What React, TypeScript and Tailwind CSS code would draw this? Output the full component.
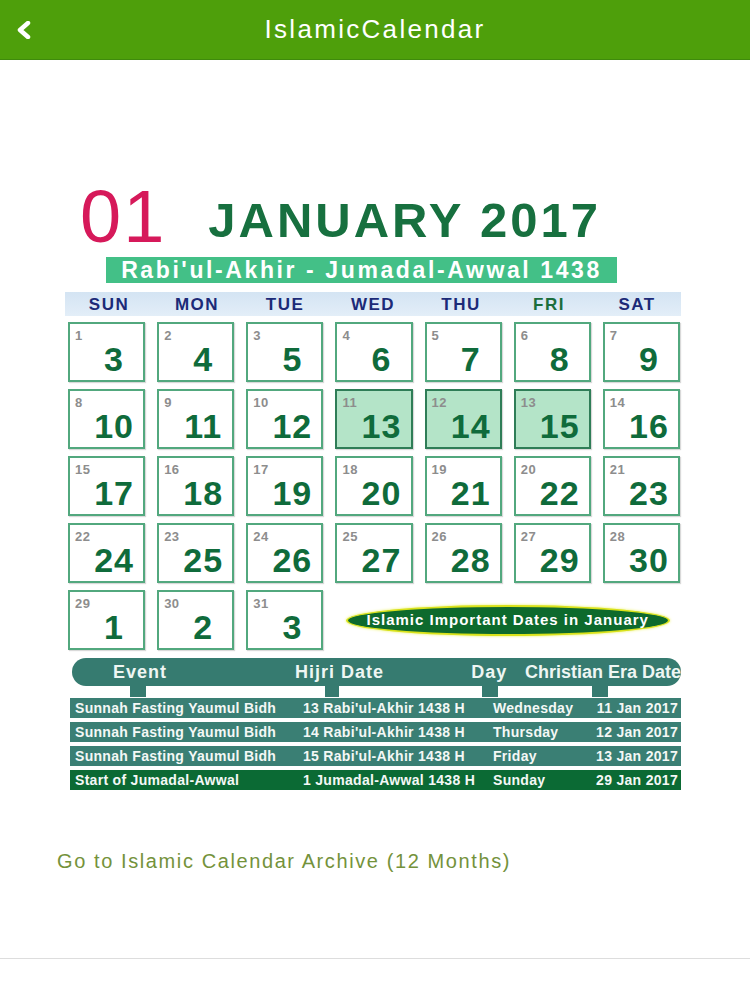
import React from "react";

type Cell = { h: number; g: number; hi?: boolean };

const cells: Cell[] = [
  { h: 1, g: 3 }, { h: 2, g: 4 }, { h: 3, g: 5 }, { h: 4, g: 6 }, { h: 5, g: 7 }, { h: 6, g: 8 }, { h: 7, g: 9 },
  { h: 8, g: 10 }, { h: 9, g: 11 }, { h: 10, g: 12 }, { h: 11, g: 13, hi: true }, { h: 12, g: 14, hi: true }, { h: 13, g: 15, hi: true }, { h: 14, g: 16 },
  { h: 15, g: 17 }, { h: 16, g: 18 }, { h: 17, g: 19 }, { h: 18, g: 20 }, { h: 19, g: 21 }, { h: 20, g: 22 }, { h: 21, g: 23 },
  { h: 22, g: 24 }, { h: 23, g: 25 }, { h: 24, g: 26 }, { h: 25, g: 27 }, { h: 26, g: 28 }, { h: 27, g: 29 }, { h: 28, g: 30 },
  { h: 29, g: 1 }, { h: 30, g: 2 }, { h: 31, g: 3 },
];

const days = ["SUN", "MON", "TUE", "WED", "THU", "FRI", "SAT"];

const events = [
  { ev: "Sunnah Fasting Yaumul Bidh", hijri: "13 Rabi'ul-Akhir 1438 H", day: "Wednesday", date: "11 Jan 2017", last: false },
  { ev: "Sunnah Fasting Yaumul Bidh", hijri: "14 Rabi'ul-Akhir 1438 H", day: "Thursday", date: "12 Jan 2017", last: false },
  { ev: "Sunnah Fasting Yaumul Bidh", hijri: "15 Rabi'ul-Akhir 1438 H", day: "Friday", date: "13 Jan 2017", last: false },
  { ev: "Start of Jumadal-Awwal", hijri: "1 Jumadal-Awwal 1438 H", day: "Sunday", date: "29 Jan 2017", last: true },
];

function DayCell({ c }: { c: Cell }) {
  return (
    <div
      className={`flex h-[60px] flex-col border-2 pl-[5px] pt-[5px] shadow-[1px_1px_1px_rgba(0,0,0,0.15)] ${
        c.hi ? "border-[#2f7d57] bg-[#b4e4c8]" : "border-[#52a87e] bg-white"
      }`}
    >
      <div className="text-[13px] font-bold leading-none tracking-[0.5px] text-[#8d8d8d]">{c.h}</div>
      <div className="pl-[10px] text-center text-[34px] font-bold leading-none tracking-[1px] text-[#0f6b3b]">
        {c.g}
      </div>
    </div>
  );
}

export default function App() {
  return (
    <div className="relative h-[1000px] w-[750px] overflow-hidden bg-white font-['Liberation_Sans',Arial,sans-serif]">
      {/* top bar */}
      <div className="flex h-[60px] items-center justify-center border-b border-[#3f8a0c] bg-[#4e9f0b]">
        <svg className="absolute left-[15px] top-[21px]" width="18" height="18" viewBox="0 0 18 18">
          <polyline points="13,2 5,9 13,16" fill="none" stroke="white" strokeWidth="4.5" strokeLinecap="round" strokeLinejoin="round" />
        </svg>
        <span className="text-[26px] tracking-[2.3px] text-white">IslamicCalendar</span>
      </div>

      {/* month heading */}
      <div className="mt-[120px] flex items-end pl-[80px]">
        <span className="text-[74px] leading-none tracking-[2px] text-[#d6195a]">01</span>
        <span className="mb-[9px] ml-[42px] text-[49px] font-bold leading-none tracking-[3px] text-[#17703f]">
          JANUARY 2017
        </span>
      </div>

      <div className="ml-[106px] mt-[3px] flex h-[26px] w-[511px] items-center justify-center bg-[#43c087]">
        <span className="whitespace-nowrap text-[23px] font-bold leading-none tracking-[2.6px] text-white">
          Rabi'ul-Akhir - Jumadal-Awwal 1438
        </span>
      </div>

      {/* weekdays */}
      <div className="ml-[65px] mt-[9px] grid h-[24px] w-[616px] grid-cols-7 items-center bg-gradient-to-b from-[#d4e4f3] to-[#e3eef8]">
        {days.map((d) => (
          <div
            key={d}
            className={`text-center text-[17px] font-bold leading-none tracking-[1.5px] ${d === "FRI" ? "text-[#1b6e3c]" : "text-[#1c2a78]"}`}
          >
            {d}
          </div>
        ))}
      </div>

      {/* grid */}
      <div className="ml-[68px] mt-[6px] grid w-[612px] grid-cols-7 gap-x-[12px] gap-y-[7px]">
        {cells.map((c) => (
          <DayCell key={c.h} c={c} />
        ))}
        <div className="col-span-4 flex items-center justify-center">
          <div className="flex h-[31px] w-[324px] items-center justify-center rounded-[50%] border-2 border-[#d9e21a] bg-[#0d6a2d] shadow-[0_0_3px_#e8ef5a]">
            <span className="whitespace-nowrap text-[15px] font-bold tracking-[1px] text-white">Islamic Important Dates in January</span>
          </div>
        </div>
      </div>

      {/* events table */}
      <div className="ml-[72px] mt-[8px] flex h-[28px] w-[609px] items-center whitespace-nowrap rounded-full bg-[#367b70] pl-[41px] text-[18px] font-bold leading-none text-[#eef6f3]">
        <span className="w-[183px] tracking-[1px]">Event</span>
        <span className="w-[177px] tracking-[1px]">Hijri Date</span>
        <span className="w-[54px] tracking-[1px]">Day</span>
        <span>Christian Era Date</span>
      </div>
      <div className="ml-[72px] flex h-[11px] w-[609px]">
        <div className="ml-[58px] w-[16px] bg-[#367b70]" />
        <div className="ml-[179px] w-[14px] bg-[#367b70]" />
        <div className="ml-[143px] w-[16px] bg-[#367b70]" />
        <div className="ml-[94px] w-[16px] bg-[#367b70]" />
      </div>
      <div className="ml-[70px] mt-px flex w-[611px] flex-col gap-[4px]">
        {events.map((e, i) => (
          <div
            key={i}
            className={`flex h-[20px] items-center whitespace-nowrap pl-[5px] pr-[3px] text-[14px] font-bold leading-none text-[#f4f8f6] ${
              e.last ? "bg-[#0b6a34]" : "bg-[#3a7f74]"
            }`}
          >
            <span className="w-[228px] tracking-[0.3px]">{e.ev}</span>
            <span className="w-[190px] tracking-[0.3px]">{e.hijri}</span>
            <span className="flex-1 tracking-[0.3px]">{e.day}</span>
            <span className="tracking-[0.3px]">{e.date}</span>
          </div>
        ))}
      </div>

      <div className="ml-[57px] mt-[61px] whitespace-nowrap text-[20px] leading-none tracking-[1.6px] text-[#74923b]">
        Go to Islamic Calendar Archive (12 Months)
      </div>

      <div className="absolute left-0 right-0 top-[958px] h-px bg-[#dddddd]" />
    </div>
  );
}
